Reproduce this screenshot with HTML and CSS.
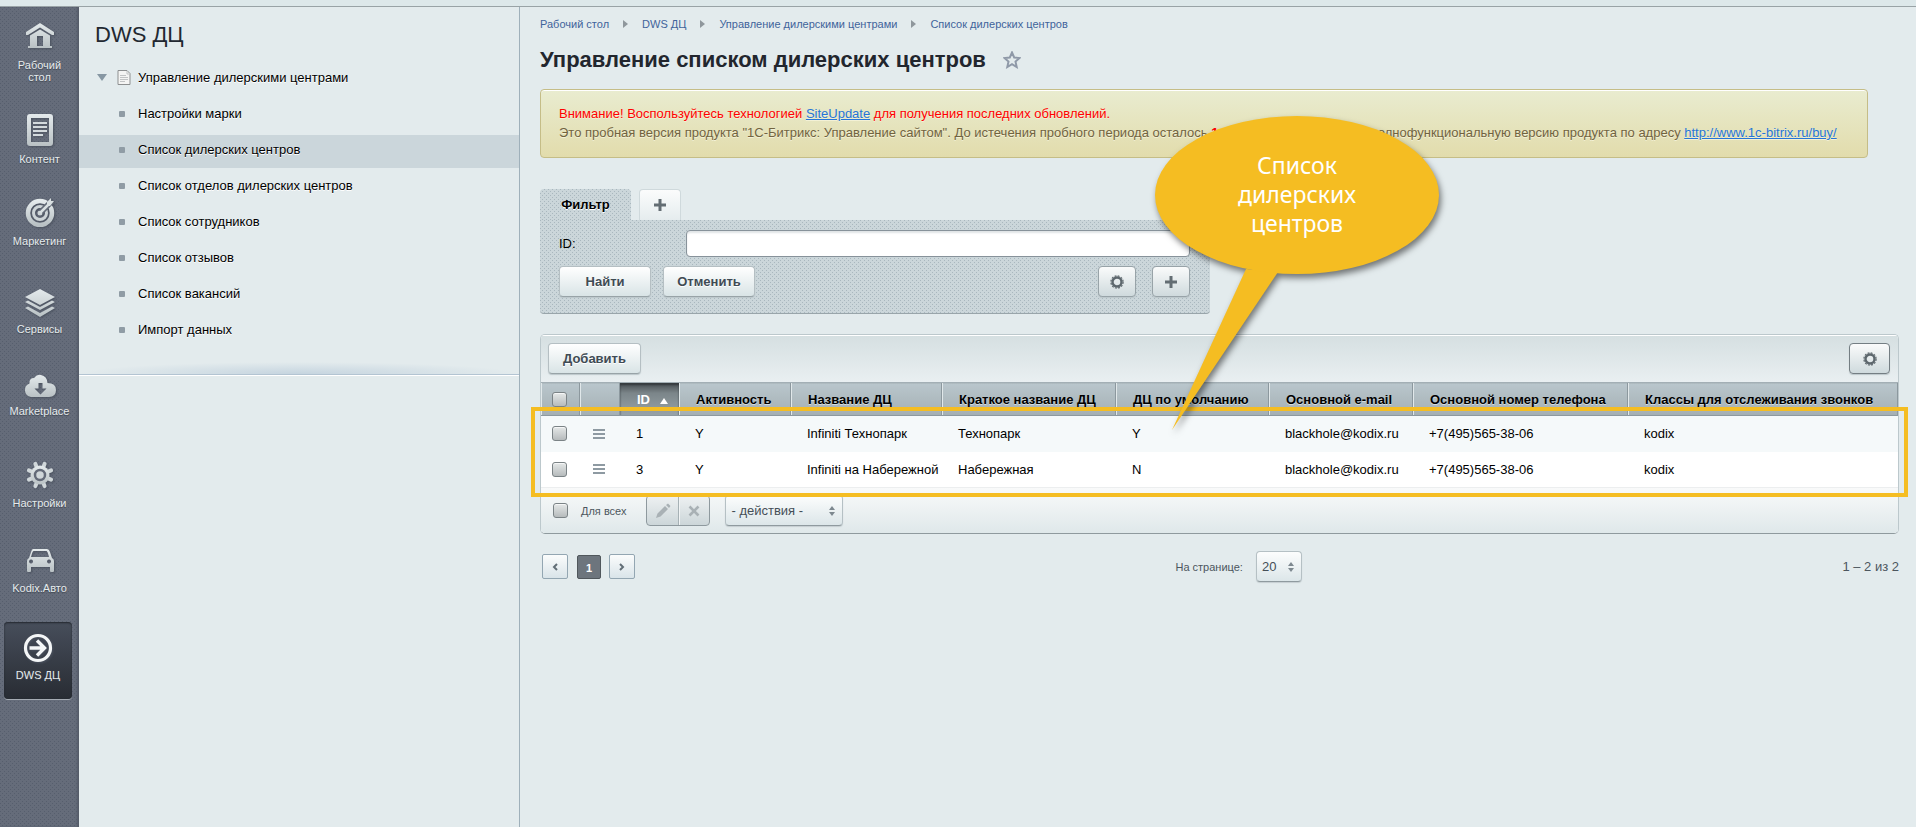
FILE: index.html
```html
<!DOCTYPE html>
<html lang="ru">
	<head>
		<meta charset="utf-8">
		<title>Управление списком дилерских центров</title>
		<link rel="stylesheet" href="styles.css">
	</head>
	<body>
		<svg class="defs" width="0" height="0">
			<defs>
				<linearGradient id="metal" x1="0" y1="0" x2="0" y2="1">
					<stop offset="0" stop-color="#e4eaec"/>
					<stop offset="1" stop-color="#b9c1c4"/>
				</linearGradient>
				<symbol id="gear" viewBox="0 0 14 14">
					<circle cx="7" cy="7" r="4.500" fill="none" stroke="#5d676d" stroke-width="2.400"/>
					<circle cx="7" cy="7" r="6.100" fill="none" stroke="#5d676d" stroke-width="1.200" stroke-dasharray="1.900 1.290"/>
				</symbol>
				<symbol id="plus" viewBox="0 0 14 14">
					<path d="M5.500 1h3v4.500H13v3H8.500V13h-3V8.500H1v-3h4.500z" fill="#636d73"/>
				</symbol>
			</defs>
		</svg>
		<div class="topbar"></div>
		<div class="page">
			<nav class="sidebar">
				<a class="section desktop" href="#">
					<svg width="30" height="28" viewBox="0 0 30 28"><path d="M15 1L1 10v3h2L15 5.500 27 13h2v-3z M5 13.500L15 7.500l10 6V24h2v2H3v-2h2z M12 14v10h6V14z" fill="url(#metal)" fill-rule="evenodd"/></svg>
					<span>Рабочий<br>стол</span>
				</a>
				<a class="section content" href="#">
					<svg width="28" height="34" viewBox="0 0 28 34"><path d="M4 1h20q3 0 3 3v26q0 3-3 3H4q-3 0-3-3V4q0-3 3-3z M5 5v24h18V5z" fill="url(#metal)" fill-rule="evenodd"/><path d="M7 10h14M7 14h14M7 18h14M7 22h10" stroke="#d3dadd" stroke-width="2"/></svg>
					<span>Контент</span>
				</a>
				<a class="section marketing" href="#">
					<svg width="30" height="30" viewBox="0 0 30 30"><circle cx="15" cy="16" r="12" fill="none" stroke="url(#metal)" stroke-width="4.500"/><circle cx="15" cy="16" r="6.500" fill="none" stroke="#cdd4d7" stroke-width="3"/><circle cx="15" cy="16" r="2.500" fill="#cdd4d7"/><path d="M16 15L27 4" stroke="#636a78" stroke-width="6"/><path d="M15 16l9-9" stroke="#d9e0e2" stroke-width="2.500"/><path d="M22 8V5l4-4v3h3l-4 5h-3z" fill="#d9e0e2"/></svg>
					<span>Маркетинг</span>
				</a>
				<a class="section services" href="#">
					<svg width="32" height="30" viewBox="0 0 32 30"><path d="M16 1l15 8-15 8L1 9z M1 14l3-1.500 12 6.500 12-6.500 3 1.500-15 8z M1 20l3-1.500L16 25l12-6.500 3 1.500-15 9z" fill="url(#metal)"/></svg>
					<span>Сервисы</span>
				</a>
				<a class="section market" href="#">
					<svg width="34" height="24" viewBox="0 0 34 24"><path d="M8 23a7 7 0 0 1-1.500-13.500Q6 4 11 4Q14 0 18 1Q24 2 24.500 9Q33 9 33 16Q33 23 26 23z M15.500 9v5.500h-4l6 6 6-6h-4V9z" fill="url(#metal)" fill-rule="evenodd"/></svg>
					<span>Marketplace</span>
				</a>
				<a class="section settings" href="#">
					<svg width="30" height="30" viewBox="0 0 30 30"><g stroke="#cfd6d9" stroke-width="4" stroke-linecap="round"><path d="M10.400 3.900L19.600 26.100M19.600 3.900L10.400 26.100M3.900 10.400L26.100 19.600M3.900 19.600L26.100 10.400"/></g><circle cx="15" cy="15" r="9.500" fill="url(#metal)"/><circle cx="15" cy="15" r="5" fill="#cfd6d9" stroke="#636a78" stroke-width="2.500"/></svg>
					<span>Настройки</span>
				</a>
				<a class="section auto" href="#">
					<svg width="28" height="24" viewBox="0 0 28 24"><path d="M7 0h14q2 0 3 3l2 6q2 1 2 3v10q0 1-1 1h-2q-1 0-1-1v-4H5v4q0 1-1 1H2q-1 0-1-1V12q0-2 2-3l2-6q1-3 2-3z M7.500 2Q6.500 2 5 8h18q-1.500-6-2.500-6z M5 10.500a2 2 0 1 0 .1 0z M23 10.500a2 2 0 1 0 .1 0z" fill="url(#metal)" fill-rule="evenodd"/></svg>
					<span>Kodix.Авто</span>
				</a>
				<a class="section current" href="#">
					<svg width="30" height="30" viewBox="0 0 30 30" fill="none" stroke="#f4f6f7"><circle cx="15" cy="15" r="12.500" stroke-width="3.200"/><path d="M6.500 15H22M14 7.500l7.500 7.500-7.500 7.500" stroke-width="3.400"/></svg>
					<span>DWS ДЦ</span>
				</a>
			</nav>
			<aside class="menu">
				<h2>DWS ДЦ</h2>
				<ul>
					<li class="parent"><a href="#"><i class="arrow"></i>
						<svg width="14" height="15" viewBox="0 0 14 15"><path d="M1 .5h9l3 3v11H1z" fill="#f4f4f3" stroke="#8d8f90"/><path d="M10 1v3h3M3 5.500h6M3 7.500h8M3 9.500h8M3 11.500h5" fill="none" stroke="#c1c3c4"/></svg>
						Управление дилерскими центрами</a></li>
					<li><a href="#"><i class="bullet"></i>Настройки марки</a></li>
					<li class="selected"><a href="#"><i class="bullet"></i>Список дилерских центров</a></li>
					<li><a href="#"><i class="bullet"></i>Список отделов дилерских центров</a></li>
					<li><a href="#"><i class="bullet"></i>Список сотрудников</a></li>
					<li><a href="#"><i class="bullet"></i>Список отзывов</a></li>
					<li><a href="#"><i class="bullet"></i>Список вакансий</a></li>
					<li><a href="#"><i class="bullet"></i>Импорт данных</a></li>
				</ul>
				<div class="menu-end"></div>
			</aside>
			<main>
				<div class="crumbs">
					<a href="#">Рабочий стол</a><i></i><a href="#">DWS ДЦ</a><i></i><a href="#">Управление дилерскими центрами</a><i></i><a href="#">Список дилерских центров</a>
				</div>
				<div class="heading">
					<h1>Управление списком дилерских центров</h1>
					<a href="#" aria-label="В избранное"><svg width="18" height="18" viewBox="0 0 18 18"><path d="M9 1.500l2.200 5 5.300.5-4 3.600 1.200 5.400L9 13.200 4.300 16l1.200-5.400-4-3.600 5.300-.5z" fill="none" stroke="#8f99a8" stroke-width="2"/></svg></a>
				</div>
				<div class="notice">
					<span class="red">Внимание! Воспользуйтесь технологией <a href="#">SiteUpdate</a> для получения последних обновлений.</span><br>
					Это пробная версия продукта "1С-Битрикс: Управление сайтом". До истечения пробного периода осталось <b class="red">1</b> день. Вы можете купить полнофункциональную версию продукта по адресу <a href="#">http://www.1c-bitrix.ru/buy/</a>
				</div>

				<form class="filter">
					<div class="tabs">
						<button type="button" class="tab active">Фильтр</button>
						<button type="button" class="tab add" aria-label="Добавить фильтр"><svg width="14" height="14"><use href="#plus"/></svg></button>
					</div>
					<div class="filter-body">
						<div class="field">
							<label for="filter_id">ID:</label>
							<input type="text" id="filter_id">
						</div>
						<div class="filter-buttons">
							<button type="button" class="btn">Найти</button>
							<button type="button" class="btn">Отменить</button>
							<span class="space"></span>
							<button type="button" class="btn icon" aria-label="Настройки фильтра"><svg width="14" height="14"><use href="#gear"/></svg></button>
							<button type="button" class="btn icon" aria-label="Добавить условие"><svg width="14" height="14"><use href="#plus"/></svg></button>
						</div>
					</div>
				</form>

				<div class="list-area">
					<div class="list">
						<div class="toolbar">
							<button type="button" class="btn">Добавить</button>
							<button type="button" class="btn icon dark" aria-label="Настройки списка"><svg width="14" height="14"><use href="#gear"/></svg></button>
						</div>
						<table>
							<colgroup>
								<col class="c-check"><col class="c-menu"><col class="c-id"><col class="c-active"><col class="c-name"><col class="c-short"><col class="c-default"><col class="c-mail"><col class="c-phone"><col>
							</colgroup>
							<thead>
								<tr>
									<th><input type="checkbox" aria-label="Выбрать все"></th>
									<th></th>
									<th class="sorted">ID<i></i></th>
									<th>Активность</th>
									<th>Название ДЦ</th>
									<th>Краткое название ДЦ</th>
									<th>ДЦ по умолчанию</th>
									<th>Основной e-mail</th>
									<th>Основной номер телефона</th>
									<th>Классы для отслеживания звонков</th>
								</tr>
							</thead>
							<tbody>
								<tr>
									<td><input type="checkbox" aria-label="Выбрать 1"></td>
									<td><button type="button" class="rowmenu" aria-label="Действия"></button></td>
									<td>1</td>
									<td>Y</td>
									<td>Infiniti Технопарк</td>
									<td>Технопарк</td>
									<td>Y</td>
									<td>blackhole@kodix.ru</td>
									<td>+7(495)565-38-06</td>
									<td>kodix</td>
								</tr>
								<tr>
									<td><input type="checkbox" aria-label="Выбрать 3"></td>
									<td><button type="button" class="rowmenu" aria-label="Действия"></button></td>
									<td>3</td>
									<td>Y</td>
									<td>Infiniti на Набережной</td>
									<td>Набережная</td>
									<td>N</td>
									<td>blackhole@kodix.ru</td>
									<td>+7(495)565-38-06</td>
									<td>kodix</td>
								</tr>
							</tbody>
						</table>
						<div class="actions">
							<input type="checkbox" id="for_all">
							<label for="for_all">Для всех</label>
							<div class="pair">
								<button type="button" disabled aria-label="Изменить"><svg width="16" height="16" viewBox="0 0 16 16"><path d="M1 15l1.500-4.500L10 3l3 3-7.500 7.500z M11 2l2-1.500L15.500 3 14 5z" fill="#a9b1b5"/></svg></button>
								<button type="button" disabled aria-label="Удалить"><svg width="12" height="12" viewBox="0 0 12 12"><path d="M1.500 1.500l9 9M10.500 1.500l-9 9" stroke="#a9b1b5" stroke-width="2.600"/></svg></button>
							</div>
							<span class="select wide"><select aria-label="Действие"><option>- действия -</option></select></span>
						</div>
					</div>
					<div class="frame"></div>
					<div class="callout">
						<svg width="300" height="330" viewBox="0 0 300 330"><path d="M99 154L25 315 131 157z"/><ellipse cx="150" cy="80" rx="142" ry="79"/></svg>
						<p>Список<br>дилерских<br>центров</p>
					</div>
				</div>

				<div class="pager">
					<div class="pages">
						<a href="#" aria-label="Назад"><svg width="8" height="8" viewBox="0 0 8 8"><path d="M6 1L3 4l3 3"/></svg></a>
						<span>1</span>
						<a href="#" aria-label="Вперед"><svg width="8" height="8" viewBox="0 0 8 8"><path d="M2 1l3 3-3 3"/></svg></a>
					</div>
					<div class="per-page">
						<label for="per_page">На странице:</label>
						<span class="select"><select id="per_page"><option>20</option></select></span>
					</div>
					<div class="total">1 – 2 из 2</div>
				</div>
			</main>
		</div>
	</body>
</html>
```

FILE: styles.css
```css
* { box-sizing:border-box; }
body { margin:0; min-height:100vh; display:flex; flex-direction:column; background:#e3ebed; color:#000; font:13px "Liberation Sans", Arial, sans-serif; }
a { color:#2675d7; }
button, input, select { font:inherit; margin:0; }
.defs { position:absolute; }
.topbar { height:7px; background:#dde8ea; border-bottom:1px solid #99a3a6; }
.page { flex:1; display:flex; }

/* left icon bar */
.sidebar { width:79px; flex:none; background-color:#656c7a; background-image:conic-gradient(at 1px 1px, transparent 75%, #565e6d 0), conic-gradient(at 1px 1px, transparent 75%, #565e6d 0); background-size:4px 4px; background-position:0 0, 2px 2px; box-shadow:inset -2px 0 2px #565d6a; }
.section { display:flex; flex-direction:column; align-items:center; color:#e6ebed; font-size:11px; line-height:12px; text-align:center; text-decoration:none; text-shadow:0 1px 1px #3e4550; }
.section svg { filter:drop-shadow(1px 1px 1px #4a515e); }
.desktop { height:106px; padding-top:15px; gap:9px; }
.desktop svg { height:28px; }
.content { height:84px; gap:6px; }
.marketing { height:91px; gap:8px; }
.services { height:86px; gap:5px; }
.market { height:86px; gap:7px; }
.settings { height:89px; gap:7px; }
.auto { height:73px; gap:9px; }
.current { height:77px; margin:0 7px 0 4px; padding-top:11px; gap:6px; background:linear-gradient(#474e5b, #282c33); border-radius:4px; box-shadow:inset 0 1px 2px #23272e, 0 1px 0 #a5abb3; }

/* menu column */
.menu { width:441px; flex:none; border-right:1px solid #9fb0ba; }
.menu h2 { margin:15px 0 0 16px; font-size:22px; font-weight:normal; line-height:26px; color:#222831; }
.menu ul { margin:15px 0 0; padding:0; list-style:none; }
.menu li { height:33px; margin-bottom:3px; }
.menu li a { display:flex; align-items:center; height:29px; padding-left:40px; color:#000; text-decoration:none; text-shadow:0 1px 0 #fff; }
.menu .parent a { padding-left:18px; }
.menu .selected { background:#cbd6db; }
.menu .parent svg { margin:0 7px 0 10px; }
.arrow { border:5px solid transparent; border-top:7px solid #8797a3; border-bottom:0; }
.bullet { width:6px; height:6px; margin-right:13px; border-radius:1px; background:#909ca5; }
.menu-end { height:24px; border-bottom:1px solid #b3c4d2; box-shadow:0 1px 0 #fff; background:radial-gradient(ellipse 50% 12px at 50% 100%, #c5d4df, transparent); }

/* content */
main { flex:1; padding:7px 17px 20px 20px; }
.crumbs { display:flex; align-items:center; height:20px; font-size:11px; }
.crumbs a { color:#3f639b; text-decoration:none; }
.crumbs i { margin:0 14px; border:4px solid transparent; border-left:5px solid #8f979c; border-right:0; }
.heading { display:flex; align-items:center; gap:17px; margin-top:13px; }
h1 { margin:0; font-size:22px; line-height:26px; color:#22262e; }
.heading a { display:flex; }
.notice { width:fit-content; margin-top:16px; padding:14px 30px 15px 18px; border:1px solid #c5bd87; border-radius:4px; background:linear-gradient(#e9ecd0, #e2dcac); box-shadow:inset 0 1px 0 #fff; color:#716340; line-height:19px; text-shadow:0 1px 0 #f3f1d6; }
.red { color:#f00; }

.filter { width:670px; margin-top:31px; }
.tabs { display:flex; gap:8px; }
.tab { height:31px; padding:0; border:1px solid #cfd9dc; border-bottom:0; border-radius:4px 4px 0 0; background:linear-gradient(#fbfcfc, #e5ecee); text-shadow:0 1px 0 #fff; }
.tab.active, .filter-body { border:0; background-color:#cbd6da; background-image:conic-gradient(at 1px 1px, transparent 75%, #a9b7be 0), conic-gradient(at 1px 1px, transparent 75%, #a9b7be 0); background-size:4px 4px; background-position:0 0, 2px 2px; }
.tab.active { width:91px; font-weight:bold; }
.tab.add { width:42px; }
.tab svg, .btn svg, .pair svg { display:block; margin:auto; }
.filter-body { padding:10px 20px 16px 19px; border-bottom:1px solid #99a5aa; border-radius:0 0 4px 4px; }
.field { display:flex; align-items:center; }
.field label { width:127px; }
.field input { flex:1; height:27px; padding:0 6px; border:1px solid #87929a; border-radius:4px; background:#fff; box-shadow:inset 0 2px 2px #e0e4e6; }
.filter-buttons { display:flex; gap:12px; margin-top:9px; }
.space { flex:1; }
.btn { height:31px; min-width:92px; padding:0 14px; border:1px solid #b5bfc3; border-bottom-color:#98a3a7; border-radius:4px; background:linear-gradient(#fff, #d9e4e6); color:#3f4b54; font-weight:bold; box-shadow:0 1px 1px #bcc7ca; text-shadow:0 1px 0 #fff; }
.filter-buttons .btn { padding:0 10px; }
.btn.icon { min-width:38px; padding:0; border-color:#98a3a8; background:linear-gradient(#fafbfb, #cfdadd); }
.filter-buttons .icon + .icon { margin-left:4px; }
.btn.dark { min-width:41px; border-color:#747e83; }

.list-area { position:relative; margin-top:20px; }
.list { border:1px solid #bcc8cc; border-bottom-color:#8f9a9e; border-radius:5px; overflow:hidden; background:#fff; }
.toolbar { display:flex; align-items:center; justify-content:space-between; height:47px; padding:0 8px 0 7px; background:linear-gradient(#d5dfe1, #e9eff1); box-shadow:inset 0 1px 0 #fff; }
table { width:100%; border-collapse:collapse; table-layout:fixed; }
.c-check { width:39px; }
.c-menu { width:40px; }
.c-id { width:59px; }
.c-active { width:112px; }
.c-name { width:151px; }
.c-short { width:174px; }
.c-default { width:153px; }
.c-mail { width:144px; }
.c-phone { width:215px; }
th, td { padding:0 0 0 17px; text-align:left; white-space:nowrap; }
th { height:33px; border-top:1px solid #a3afb5; border-bottom:1px solid #8d999f; background:linear-gradient(#b9c6cc, #a4afb3); box-shadow:inset 1px 0 0 #e1e8ea, inset -1px 0 0 #8c989e; text-shadow:0 1px 0 #d4dddf; }
th.sorted { background:linear-gradient(#4a5054, #7b8589 30%, #98a3a8); box-shadow:inset 0 2px 2px #34393d; color:#fff; text-shadow:none; }
th.sorted i { display:inline-block; margin-left:10px; border:4px solid transparent; border-bottom:6px solid #fff; border-top:0; }
td { height:36px; padding-left:16px; }
th:first-child, td:first-child { padding-left:11px; }
th:nth-child(2), td:nth-child(2) { padding-left:13px; }
tbody tr:first-child { background:#f5f9fa; }
tbody tr:last-child { border-bottom:1px solid #eceeef; }
input[type=checkbox] { appearance:none; display:block; width:15px; height:15px; border:1px solid #7b8386; border-radius:3px; background:linear-gradient(#e5e8e8, #b6bbbc); box-shadow:inset 0 1px 0 #f6f7f7; }
.rowmenu { display:block; width:12px; height:10px; padding:0; border:0; background:repeating-linear-gradient(#8e9aa2 0 2px, transparent 2px 4px); }
.actions { display:flex; align-items:center; height:45px; padding-left:12px; background:linear-gradient(#f9fafa, #dfe8ea); color:#4c565e; }
.actions label { margin:0 20px 0 13px; font-size:11px; }
.pair { display:flex; margin-right:15px; border:1px solid #8e999e; border-radius:4px; background:linear-gradient(#eef1f2, #ccd6d9); }
.pair button { width:31px; height:29px; padding:0; border:0; background:none; }
.pair button + button { border-left:1px solid #a6b1b5; box-shadow:inset 1px 0 0 #f1f4f5; }
.select { position:relative; display:block; width:46px; }
.select.wide { width:118px; }
.select select { display:block; width:100%; height:31px; padding:0 0 0 5px; appearance:none; border:1px solid #b5c0c4; border-bottom-color:#8f9a9f; border-radius:4px; background:linear-gradient(#fcfdfd, #dce6e9); color:#454f57; box-shadow:0 1px 1px #c5ced1; }
.select::before, .select::after { content:""; position:absolute; right:8px; top:11px; border:3px solid transparent; border-bottom:4px solid #7d888f; border-top:0; }
.select::after { top:17px; border-top:4px solid #7d888f; border-bottom:0; }

/* annotation over the list */
.frame { position:absolute; left:-9px; right:-9px; top:73px; height:90px; border:4px solid #f5bd22; }
.callout { position:absolute; left:607px; top:-219px; width:300px; }
.callout svg { display:block; fill:#f5bd22; filter:drop-shadow(2px 4px 3px rgba(0, 0, 0, .5)); }
.callout p { position:absolute; left:0; right:0; top:36px; margin:0; color:#fff; font:23px/29px "Noto Sans", sans-serif; text-align:center; }

.pager { display:flex; align-items:center; justify-content:space-between; margin-top:17px; color:#4c565e; }
.pages { display:flex; align-items:center; padding-left:2px; }
.pages a { display:flex; align-items:center; justify-content:center; width:26px; height:25px; border:1px solid #93a6b2; border-radius:2px; background:linear-gradient(#fbfcfc, #d9e4e9); }
.pages svg { fill:none; stroke:#626e76; stroke-width:2; }
.pages span { width:24px; height:24px; margin:0 8px 0 9px; border:1px solid #50575c; border-radius:2px; background:#6d757d; color:#fff; font-size:11px; font-weight:bold; line-height:24px; text-align:center; }
.per-page { display:flex; align-items:center; gap:13px; }
.per-page label { font-size:11px; }
```
